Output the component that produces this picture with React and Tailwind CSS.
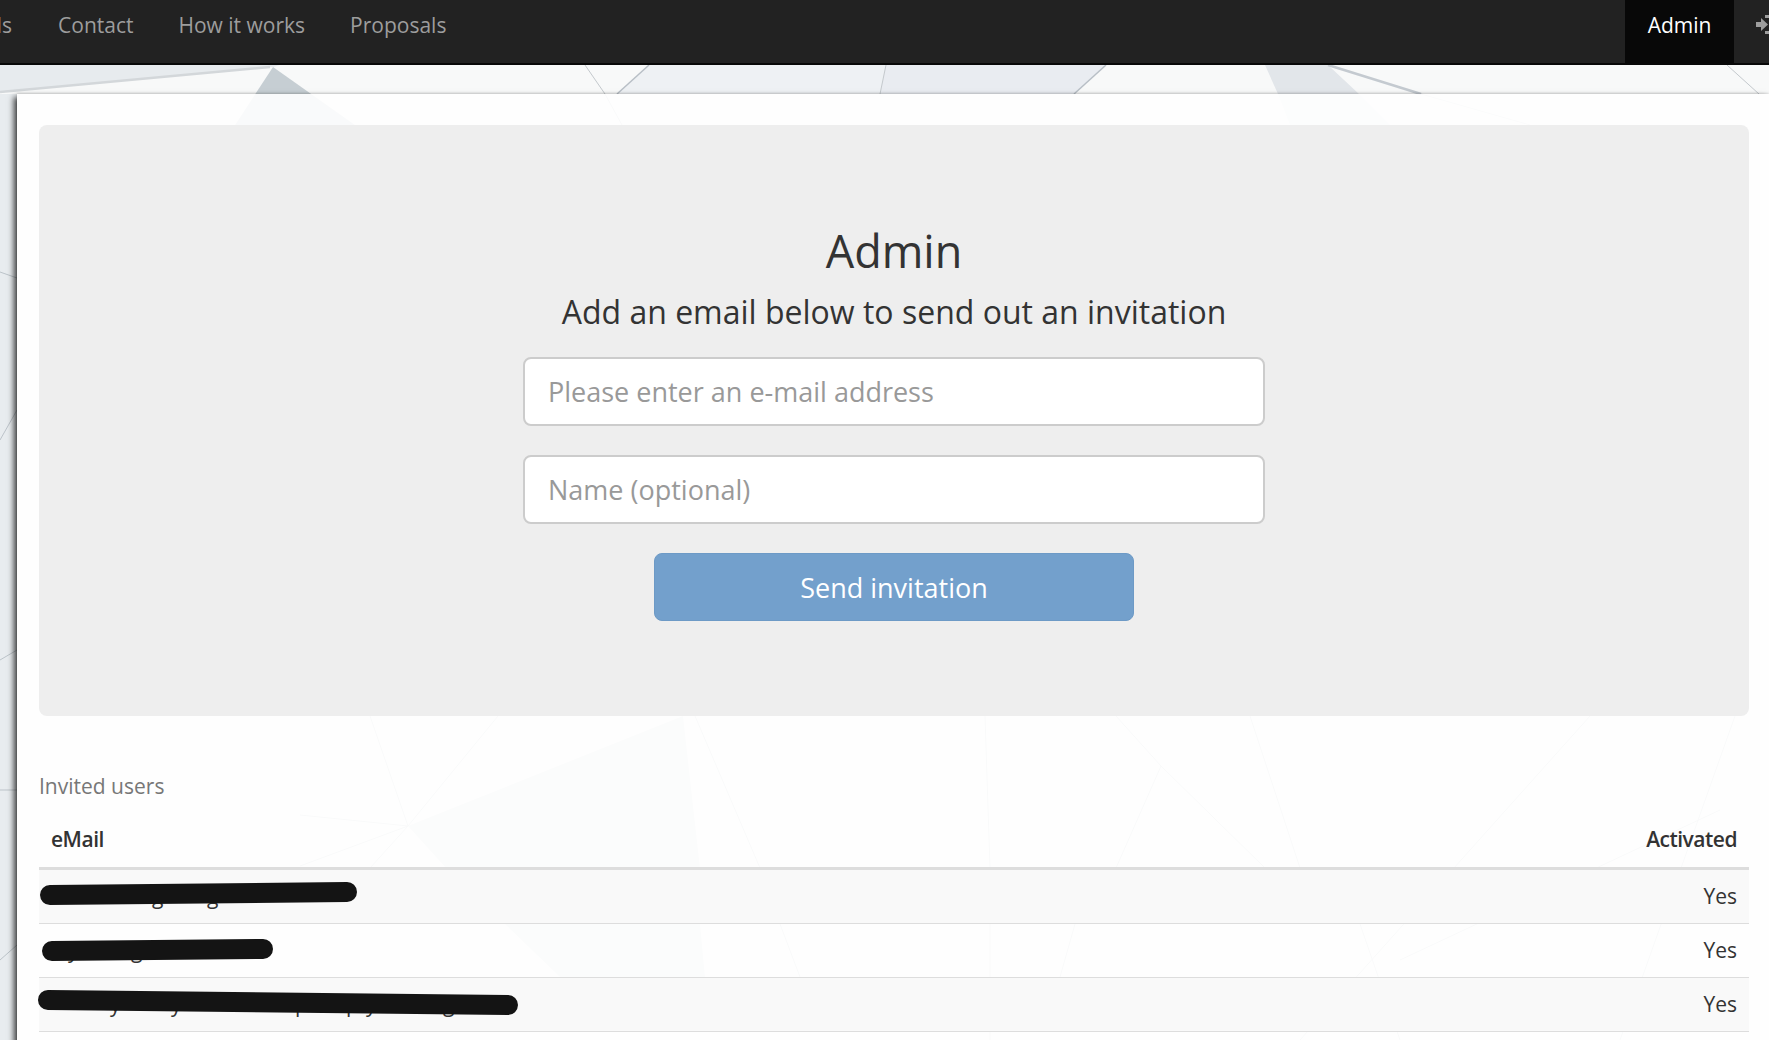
import React from "react";

const invited = [
    { line: [11, 25, 308, 22], letters: [["g", 113], ["g", 168]] },
    { line: [13, 27, 224, 25], letters: [["y", 29], ["g", 92]] },
    {
        line: [9, 22, 469, 27],
        letters: [["y", 71], ["y", 132], ["p", 256], ["p", 307], ["y", 327], ["g", 404]],
    },
];

// faint polygon artwork behind the page
function Backdrop() {
    return (
        <svg className="absolute inset-0" width="1769" height="1040" viewBox="0 0 1769 1040">
            <rect width="1769" height="1040" fill="#f8f9f9" />
            <polygon points="0,65 280,65 273,67 0,92" fill="#e7ebee" />
            <polygon points="273,67 235,125 355,125" fill="#c6ced3" />
            <line x1="0" y1="92" x2="270" y2="67" stroke="#d3d7da" strokeWidth="2.5" />
            <polygon points="649,65 886,65 880,94 617,94" fill="#eef1f4" />
            <polygon points="886,65 1106,65 1074,94 880,94" fill="#e9ecf1" />
            <line x1="585" y1="65" x2="605" y2="94" stroke="#c4c9cd" />
            <line x1="605" y1="94" x2="622" y2="125" stroke="#c4c9cd" />
            <line x1="649" y1="65" x2="617" y2="94" stroke="#b8bfc6" strokeWidth="1.5" />
            <line x1="886" y1="65" x2="880" y2="94" stroke="#c4c9cd" />
            <line x1="1106" y1="65" x2="1074" y2="94" stroke="#b8bfc6" strokeWidth="1.5" />
            <polygon points="1265,65 1328,65 1359,94 1390,125 1290,125 1278,94" fill="#e2e6ea" />
            <line x1="1328" y1="65" x2="1421" y2="94" stroke="#c4cad0" strokeWidth="2.5" />
            <line x1="1421" y1="94" x2="1530" y2="125" stroke="#d5d9dc" />
            <line x1="1727" y1="65" x2="1759" y2="94" stroke="#c4c9cd" />

            {/* left strip */}
            <rect x="0" y="94" width="17" height="946" fill="#e8ecef" />
            <line x1="0" y1="272" x2="17" y2="278" stroke="#bcc3c9" />
            <line x1="0" y1="440" x2="17" y2="410" stroke="#bcc3c9" />
            <line x1="0" y1="660" x2="17" y2="650" stroke="#bcc3c9" />
            <line x1="0" y1="790" x2="17" y2="790" stroke="#bcc3c9" />
            <line x1="0" y1="960" x2="17" y2="945" stroke="#bcc3c9" />

            {/* lower part, seen through the white panel */}
            <polygon points="408,826 683,716 700,868 446,868" fill="#d8dedf" />
            <polygon points="505,924 700,924 705,977 560,977" fill="#d8dedf" />
            <g stroke="#c4cbce" fill="none">
                <path d="M408 826 L370 716 M408 826 L498 716 M408 826 L300 815 M408 826 L300 866 M408 826 L370 868" />
                <path d="M695 716 L760 868 M985 716 L990 868 M1116 716 L1161 766 L1116 868 M1161 766 L1265 868 M1250 716 L1300 868" />
                <path d="M1590 716 L1300 1040 M1735 716 L1620 1040 M1360 924 L1400 1040 M1400 960 L1720 810" />
                <path d="M780 924 L800 977 M990 924 L990 1040 M1075 924 L1060 977" />
            </g>
        </svg>
    );
}

function Redacted({ line, letters }) {
    return (
        <div className="relative flex-1 h-full">
            {letters.map(([ch, x], i) => (
                <span key={i} className="absolute top-[11px]" style={{ left: x }}>
                    {ch}
                </span>
            ))}
            <svg className="absolute left-0 top-0 overflow-visible" width="500" height="53">
                <line
                    x1={line[0]}
                    y1={line[1]}
                    x2={line[2]}
                    y2={line[3]}
                    stroke="#141414"
                    strokeWidth="20"
                    strokeLinecap="round"
                />
            </svg>
        </div>
    );
}

export default function App() {
    return (
        <div className="relative w-full h-[1040px] overflow-hidden bg-white font-['Open_Sans',sans-serif] text-[#333]">
            <Backdrop />

            {/* Navbar */}
            <nav className="relative z-10 flex justify-between h-[65px] bg-[#222] border-b-2 border-[#080808] text-[21px] text-[#9d9d9d]">
                <div className="flex items-center pb-[11px] ml-[-42px] gap-[45px]">
                    <span className="mr-[1px]">Deals</span>
                    <span>Contact</span>
                    <span>How it works</span>
                    <span>Proposals</span>
                </div>
                <div className="flex">
                    <div className="flex items-center justify-center w-[109px] pb-[11px] bg-[#080808] text-white">
                        Admin
                    </div>
                    <div className="w-[35px] pl-[22px] pt-[14px]">
                        <svg width="13" height="21" viewBox="0 0 13 21" fill="#9d9d9d">
                            <path d="M0 8h5V4l7 6.5L5 17v-4H0z" />
                            <path d="M9 1h4v3H9zM9 17h4v3H9z" />
                        </svg>
                    </div>
                </div>
            </nav>

            {/* Page */}
            <main className="relative ml-[17px] mt-[29px] h-[960px] pl-[22px] pr-[20px] pt-[31px] bg-white/90 shadow-[-3px_3px_6px_rgba(0,0,0,0.75),0_-1px_2px_rgba(0,0,0,0.1)]">
                <section className="flex flex-col items-center h-[591px] pt-[93px] bg-[#eee] rounded-lg">
                    <h1 className="text-[45px] leading-[66px] text-[#333]">Admin</h1>
                    <p className="mt-[5px] text-[32px] leading-[45px]">
                        Add an email below to send out an invitation
                    </p>
                    <input
                        className="w-[742px] h-[69px] mt-[23px] px-[23px] bg-white border-2 border-[#ccc] rounded-lg text-[27px] placeholder:text-[#999]"
                        placeholder="Please enter an e-mail address"
                    />
                    <input
                        className="w-[742px] h-[69px] mt-[29px] px-[23px] bg-white border-2 border-[#ccc] rounded-lg text-[27px] placeholder:text-[#999]"
                        placeholder="Name (optional)"
                    />
                    <button className="w-[480px] h-[68px] mt-[29px] pt-[2px] bg-[#73a0cc] border border-[#6d9ac6] rounded-lg text-[27px] text-white">
                        Send invitation
                    </button>
                </section>

                {/* Invited users */}
                <p className="mt-[56px] text-[21px] leading-[28px] text-[#777]">Invited users</p>
                <div className="flex justify-between items-center h-[62px] mt-[8px] px-[12px] pt-[5px] border-b-[3px] border-[#ddd] text-[21px] font-semibold tracking-[-0.5px]">
                    <span>eMail</span>
                    <span>Activated</span>
                </div>
                {invited.map((row, i) => (
                    <div
                        key={i}
                        className={`flex items-center h-[54px] border-b border-[#ddd] text-[21px] pr-[12px] ${
                            i % 2 === 0 ? "bg-[#f9f9f9]" : ""
                        }`}
                    >
                        <Redacted line={row.line} letters={row.letters} />
                        <span>Yes</span>
                    </div>
                ))}
            </main>
        </div>
    );
}
